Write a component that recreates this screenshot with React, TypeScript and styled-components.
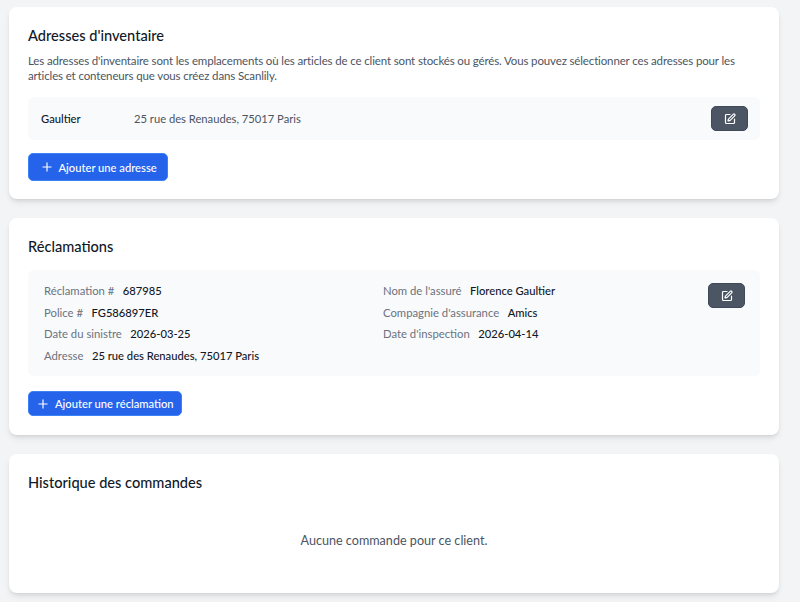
import { Plus, SquarePen } from 'lucide-react';
import styled, { createGlobalStyle } from 'styled-components';

const GlobalStyle = createGlobalStyle`
  html, body {
    margin: 0;
    padding: 0;
    background: #f3f4f6;
    font-family: 'Lato', 'Noto Sans', sans-serif;
    overflow: hidden;
  }
`;

function App() {
  return (
    <Page>
      <GlobalStyle />
      <Card $paddingBottom={18}>
        <Title>Adresses d'inventaire</Title>
        <Description>
          Les adresses d'inventaire sont les emplacements où les articles de ce client sont stockés ou gérés. Vous pouvez sélectionner ces adresses pour les articles et conteneurs que vous créez dans Scanlily.
        </Description>
        <AddressRow>
          <AddressName>Gaultier</AddressName>
          <AddressText>25 rue des Renaudes, 75017 Paris</AddressText>
          <EditButton><SquarePen size={12} strokeWidth={2.4} /></EditButton>
        </AddressRow>
        <AddButton $height={28} $paddingX={10.5} $marginTop={13}>
          <Plus size={14} strokeWidth={2} />
          Ajouter une adresse
        </AddButton>
      </Card>

      <Card $paddingBottom={18.5}>
        <Title>Réclamations</Title>
        <ClaimBlock>
          <ClaimColumn>
            <Field><FieldLabel>Réclamation #</FieldLabel><FieldValue>687985</FieldValue></Field>
            <Field><FieldLabel>Police #</FieldLabel><FieldValue>FG586897ER</FieldValue></Field>
            <Field><FieldLabel>Date du sinistre</FieldLabel><FieldValue>2026-03-25</FieldValue></Field>
            <Field><FieldLabel>Adresse</FieldLabel><FieldValue>25 rue des Renaudes, 75017 Paris</FieldValue></Field>
          </ClaimColumn>
          <ClaimColumn>
            <Field><FieldLabel>Nom de l'assuré</FieldLabel><FieldValue>Florence Gaultier</FieldValue></Field>
            <Field><FieldLabel>Compagnie d'assurance</FieldLabel><FieldValue>Amics</FieldValue></Field>
            <Field><FieldLabel>Date d'inspection</FieldLabel><FieldValue>2026-04-14</FieldValue></Field>
          </ClaimColumn>
          <EditButton><SquarePen size={12} strokeWidth={2.4} /></EditButton>
        </ClaimBlock>
        <AddButton $height={25} $paddingX={7} $marginTop={15}>
          <Plus size={14} strokeWidth={2} />
          Ajouter une réclamation
        </AddButton>
      </Card>

      <Card $paddingBottom={0}>
        <Title>Historique des commandes</Title>
        <EmptyState>Aucune commande pour ce client.</EmptyState>
      </Card>
    </Page>
  );
}

const Page = styled.div`
  display: flex;
  flex-direction: column;
  gap: 19px;
  box-sizing: border-box;
  width: 800px;
  height: 602px;
  padding: 7px 21px 0 9px;
`;

const Card = styled.section<{ $paddingBottom: number }>`
  box-sizing: border-box;
  padding: 19px 19px ${(p) => p.$paddingBottom}px;
  background: #fff;
  border-radius: 8px;
  box-shadow: 0 4px 6px -1px rgba(0, 0, 0, 0.1), 0 2px 4px -2px rgba(0, 0, 0, 0.1);
`;

const Title = styled.h2`
  margin: 0;
  font-size: 14.6px;
  line-height: 19px;
  font-weight: 500;
  color: #111827;
`;

const Description = styled.p`
  margin: 8px 0 0;
  font-size: 11.5px;
  letter-spacing: -0.14px;
  line-height: 15px;
  color: #4b5563;
`;

const AddressRow = styled.div`
  display: flex;
  align-items: center;
  height: 43px;
  margin-top: 14px;
  padding: 0 12px 0 13px;
  background: #f9fafb;
  border-radius: 6px;
  font-size: 11.2px;
`;

const AddressName = styled.span`
  width: 93px;
  font-weight: 500;
  color: #111827;
`;

const AddressText = styled.span`
  flex: 1;
  color: #4b5563;
`;

const EditButton = styled.button`
  display: flex;
  align-items: center;
  justify-content: center;
  flex-shrink: 0;
  width: 37px;
  height: 25px;
  padding: 0;
  color: #fff;
  background: #4b5563;
  border: 1px solid #3f4957;
  border-radius: 5px;
`;

const AddButton = styled.button<{ $height: number; $paddingX: number; $marginTop: number }>`
  display: inline-flex;
  align-items: center;
  gap: 5px;
  height: ${(p) => p.$height}px;
  margin-top: ${(p) => p.$marginTop}px;
  padding: 0 ${(p) => p.$paddingX}px;
  font-family: inherit;
  font-size: 11.2px;
  font-weight: 500;
  color: #fff;
  background: #2563eb;
  border: 1px solid #3b82f6;
  border-radius: 5px;
`;

const ClaimBlock = styled.div`
  display: grid;
  grid-template-columns: 339px 1fr auto;
  height: 106px;
  box-sizing: border-box;
  margin-top: 14px;
  padding: 13px 15px 0 16px;
  background: #f9fafb;
  border-radius: 6px;
`;

const ClaimColumn = styled.div`
  display: flex;
  flex-direction: column;
  gap: 5.5px;
`;

const Field = styled.div`
  display: flex;
  gap: 8.5px;
  font-size: 11.3px;
  line-height: 16px;
`;

const FieldLabel = styled.span`
  color: #6b7280;
`;

const FieldValue = styled.span`
  font-size: 11.2px;
  font-weight: 500;
  color: #111827;
`;

const EmptyState = styled.p`
  margin: 39px 0 0;
  padding-bottom: 42px;
  font-size: 12.6px;
  line-height: 20px;
  text-align: center;
  color: #4b5563;
`;

export default App;
